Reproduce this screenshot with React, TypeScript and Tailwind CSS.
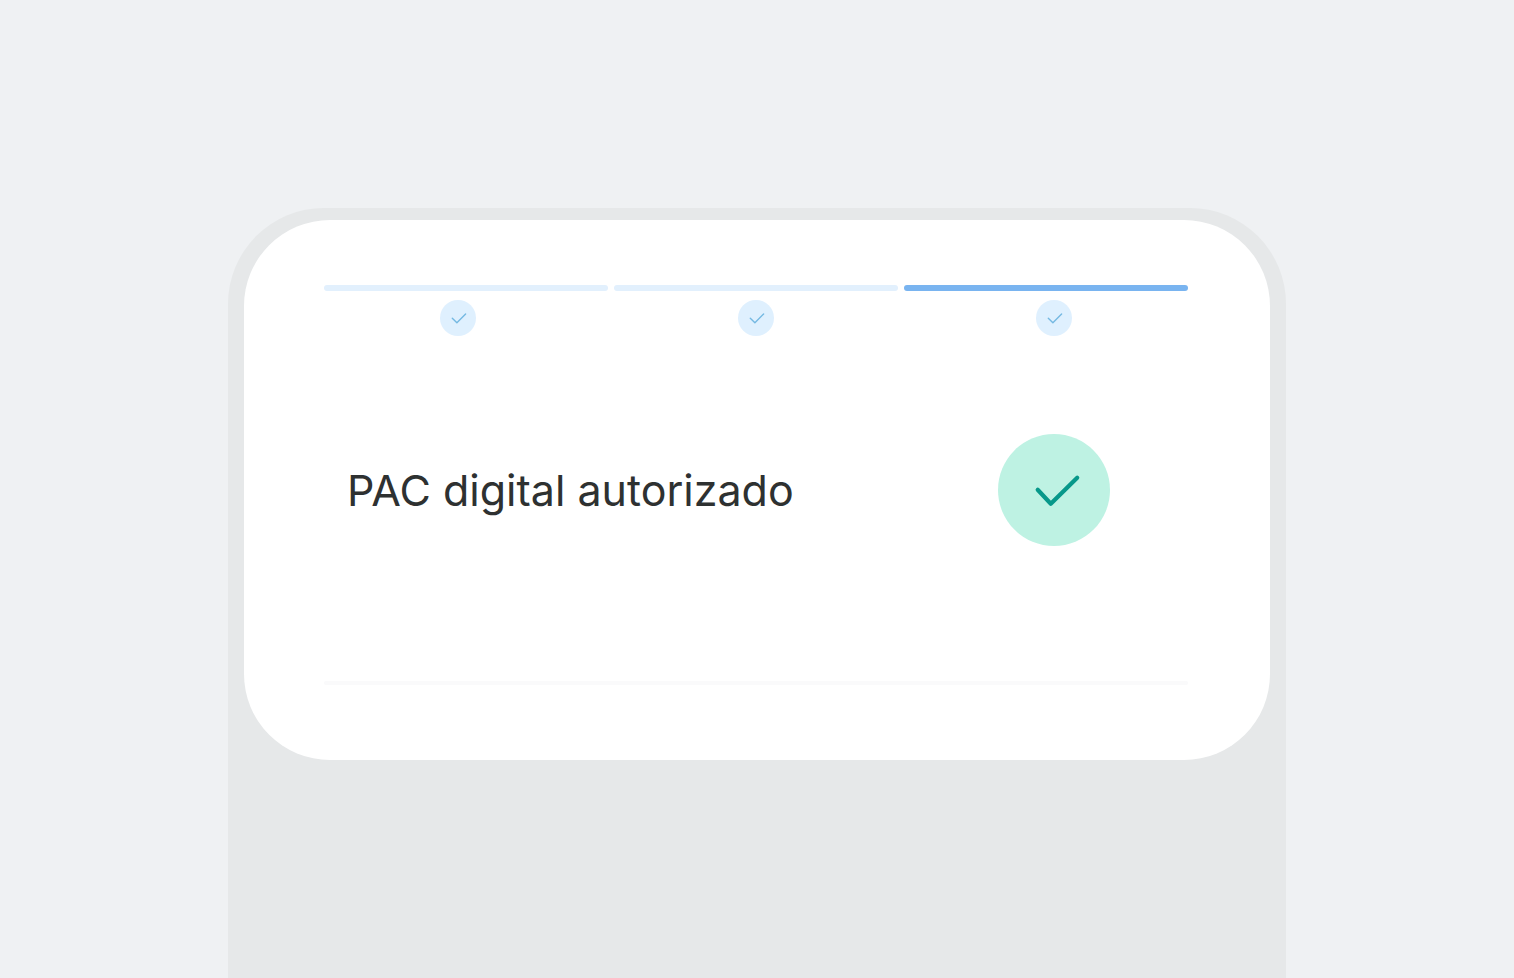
import React from "react";

type Step = { id: number; active: boolean };

const steps: Step[] = [
  { id: 1, active: false },
  { id: 2, active: false },
  { id: 3, active: true },
];

function SmallCheck() {
  return (
    <svg viewBox="0 0 36 36" className="size-9" fill="none" aria-hidden="true">
      <path d="M12.3 18.2L16.9 22.8L25.6 14" stroke="#75b9e2" strokeWidth="1.4" strokeLinecap="round" strokeLinejoin="round" />
    </svg>
  );
}

function LargeCheck() {
  return (
    <svg viewBox="0 0 112 112" className="size-28" fill="none" aria-hidden="true">
      <path d="M39.7 55.7L52.8 69.8L79.2 43.8" stroke="#07988a" strokeWidth="4.2" strokeLinecap="round" strokeLinejoin="round" />
    </svg>
  );
}

function Progress() {
  return (
    <div>
      <div className="grid grid-cols-3 gap-1.5 px-[15px]">
        {steps.map((step) => (
          <div key={step.id} className={step.active ? "h-1.5 rounded-full bg-[#79b4f0]" : "h-1.5 rounded-full bg-[#e2f0fd]"} />
        ))}
      </div>
      <ol className="mt-[9px] grid grid-cols-3 justify-items-center">
        {steps.map((step) => (
          <li key={step.id} className="size-9 rounded-full bg-[#dff0fe]">
            <SmallCheck />
          </li>
        ))}
      </ol>
    </div>
  );
}

export default function App() {
  return (
    <main className="flex min-h-screen flex-col items-center bg-[#eff1f3] pt-[208px] font-[Inter,sans-serif]">
      <div className="w-full max-w-[1058px] grow rounded-t-[96px] bg-[#e6e8e9] px-4 pt-3">
        <section className="rounded-[86px] bg-white pt-[65px] pr-[67px] pb-[75px] pl-[65px]">
          <Progress />
          <div className="mt-[98px] grid grid-cols-3 items-center">
            <h1 className="col-span-2 pl-[38px] text-[43px] leading-[56px] font-normal text-[#2e3131]">PAC digital autorizado</h1>
            <div className="size-28 justify-self-center rounded-full bg-[#bef2e3]">
              <LargeCheck />
            </div>
          </div>
          <hr className="mx-[15px] mt-[135px] h-1 rounded-full border-0 bg-[#fafafb]" />
        </section>
      </div>
    </main>
  );
}
